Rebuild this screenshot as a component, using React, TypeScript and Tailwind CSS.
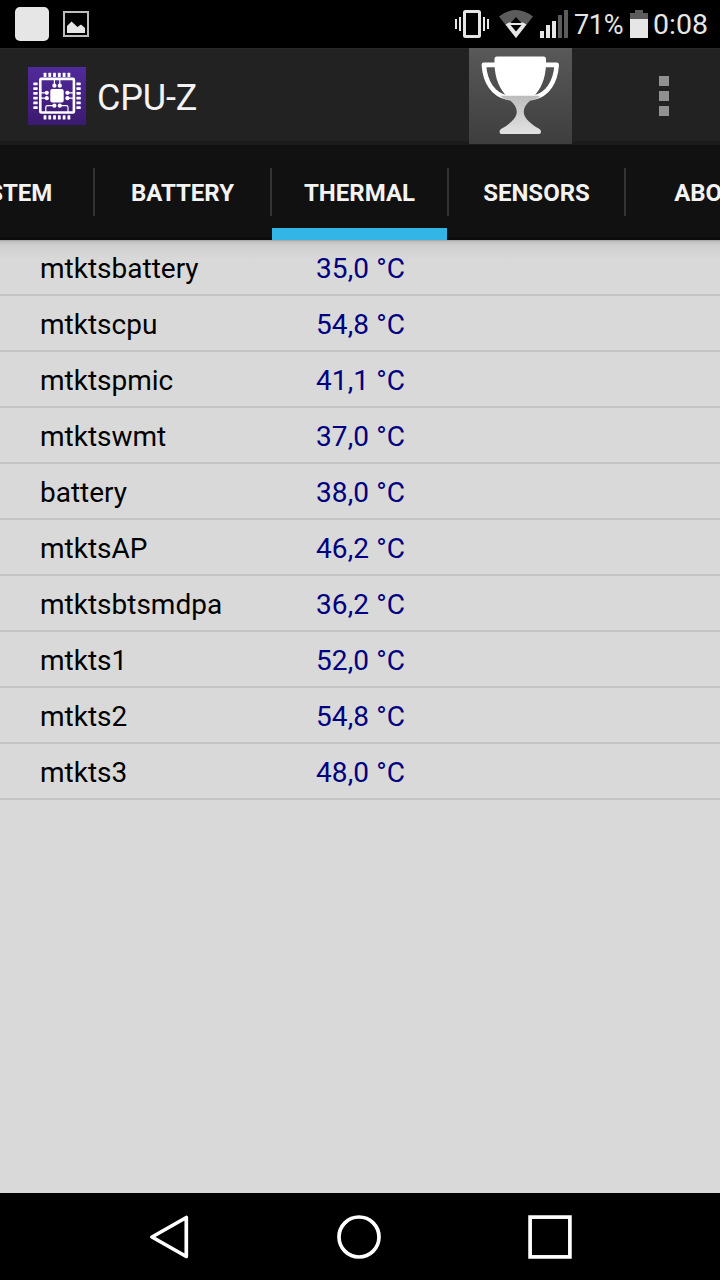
import React from 'react';

interface Sensor {
  name: string;
  value: string;
}

const sensors: Sensor[] = [
  { name: 'mtktsbattery', value: '35,0 °C' },
  { name: 'mtktscpu', value: '54,8 °C' },
  { name: 'mtktspmic', value: '41,1 °C' },
  { name: 'mtktswmt', value: '37,0 °C' },
  { name: 'battery', value: '38,0 °C' },
  { name: 'mtktsAP', value: '46,2 °C' },
  { name: 'mtktsbtsmdpa', value: '36,2 °C' },
  { name: 'mtkts1', value: '52,0 °C' },
  { name: 'mtkts2', value: '54,8 °C' },
  { name: 'mtkts3', value: '48,0 °C' },
];

const tabs = ['SYSTEM', 'BATTERY', 'THERMAL', 'SENSORS', 'ABOUT'];
const activeTab = 'THERMAL';

const pins = [17, 21.75, 26.5, 31.3, 36.1, 40.9];

const ChipIcon = () => (
  <svg width="58" height="58" viewBox="0 0 58 58" className="-mt-[2px] shrink-0">
    <defs>
      <linearGradient id="chip" x1="0" y1="0" x2="0" y2="1">
        <stop offset="0" stopColor="#512a9b" />
        <stop offset="1" stopColor="#3b1a70" />
      </linearGradient>
    </defs>
    <rect width="58" height="58" fill="url(#chip)" />
    <g fill="#fff">
      {pins.map((p) => (
        <g key={p}>
          <rect x={p - 1.4} y="5.7" width="2.8" height="4.3" rx="0.6" />
          <rect x={p - 1.4} y="48.2" width="2.8" height="4.3" rx="0.6" />
          <rect x="5.3" y={p - 1.6} width="4.4" height="2.8" rx="0.6" />
          <rect x="48.4" y={p - 1.6} width="4.4" height="2.8" rx="0.6" />
        </g>
      ))}
      <rect x="22.3" y="22" width="13.4" height="13.4" rx="2" />
      <circle cx="26.4" cy="18.7" r="2.1" />
      <circle cx="31.8" cy="18.7" r="2.1" />
      <circle cx="18.8" cy="25.8" r="2.1" />
      <circle cx="18.8" cy="31.2" r="2.1" />
      <circle cx="39.4" cy="25.8" r="2.1" />
      <circle cx="39.4" cy="31.2" r="2.1" />
      <circle cx="26.4" cy="38.7" r="2.1" />
      <circle cx="31.8" cy="38.7" r="2.1" />
    </g>
    <g fill="none" stroke="#fff" strokeWidth="1.2">
      <rect x="12.3" y="11.9" width="33.6" height="33.6" rx="1" strokeWidth="2.6" />
      <path d="M26.4 18V12M31.8 18V12M13 25.8h6M13 31.2h6M39.4 25.8h6M39.4 31.2h6" />
      <path d="M26.4 38.7h-7q-1.6 0-1.6 1.6V45M31.8 38.7h6.6q1.6 0 1.6 1.6V45" />
    </g>
  </svg>
);

const TrophyIcon = () => (
  <svg width="103" height="96" viewBox="0 0 103 96">
    <defs>
      <linearGradient id="stem" x1="0" y1="0" x2="0" y2="1">
        <stop offset="0" stopColor="#bcbcbc" />
        <stop offset="1" stopColor="#e2e2e2" />
      </linearGradient>
    </defs>
    <path d="M27 16.9H14.9C16 34 24 46.5 38 49.5M76 16.9H87.7C86.6 34 78.6 46.5 65 49.5" fill="none" stroke="#fff" strokeWidth="4.6" strokeLinejoin="round" />
    <path d="M28 8.5H74.5Q77 8.5 77 11V15C77 31 71 42 65 48H37.5C31.5 42 25.5 31 25.5 15V11Q25.5 8.5 28 8.5Z" fill="#fff" />
    <path d="M31 47.8H71.5Q67 52 61 52.8C52.5 60 53 68 60.5 74Q64.5 78 70.5 81Q72 82 72 84Q72 86 70 86H32.5Q30.5 86 30.5 84Q30.5 82 32 81Q38 78 42 74C49.5 68 50 60 41.5 52.8Q35.5 52 31 47.8Z" fill="url(#stem)" />
  </svg>
);

const StatusBar = () => (
  <div className="flex h-12 items-start bg-black text-[#e6e6e6]">
    <div className="mt-[7px] ml-[15px] h-[34px] w-[34px] rounded-[5px] bg-[#e6e6e6]" />
    <svg width="26" height="26" viewBox="0 0 26 26" className="mt-[11px] ml-[14px]">
      <rect x="1" y="1" width="24" height="24" fill="none" stroke="#bdbdbd" strokeWidth="2" />
      <path d="M4 22V15L8.5 10.5L14.5 16L18 13.5L22 17V22Z" fill="#e6e6e6" />
    </svg>
    <svg width="34" height="28" viewBox="0 0 34 28" className="mt-[10px] ml-[366px]" fill="#e6e6e6">
      <path d="M0 9h2v10H0zM4 7h2v14H4zM28 7h2v14h-2zM32 9h2v10h-2z" />
      <rect x="9.5" y="1.5" width="15" height="25" rx="1" fill="none" stroke="#e6e6e6" strokeWidth="3" />
    </svg>
    <svg width="34" height="28" viewBox="0 0 34 28" className="mt-[10px] ml-[10px]">
      <path d="M0 6.5Q17 -6.5 34 6.5L17 28Z" fill="#5c5c5c" />
      <path d="M6.5 14.5L10 12.5H24L27.5 14.5L17 28Z" fill="#e6e6e6" />
      <path d="M17 7L22.5 13H11.5ZM11.5 15H22.5L17 21.5Z" fill="#000" />
    </svg>
    <svg width="28" height="28" viewBox="0 0 28 28" className="mt-[10px] ml-[7px]">
      <path d="M0 21h4v7H0zM6 15h4v13H6zM12 11h4v17h-4z" fill="#e6e6e6" />
      <path d="M18 5h4v23h-4zM24 0h4v28h-4z" fill="#5c5c5c" />
    </svg>
    <span className="ml-[6px] w-[50px] pt-[7px] text-[27px] leading-9 tracking-[-0.3px] whitespace-nowrap">71%</span>
    <svg width="18" height="28" viewBox="0 0 18 28" className="mt-[10px] ml-[6px]">
      <path d="M5 0h8v3h5v6H0V3h5z" fill="#5c5c5c" />
      <path d="M0 9h18v19H0z" fill="#e6e6e6" />
    </svg>
    <span className="ml-[5px] pt-[7px] text-[28.5px] leading-9 whitespace-nowrap">0:08</span>
  </div>
);

const ActionBar = () => (
  <div className="flex h-[97px] border-t border-b-4 border-t-[#292929] border-b-[#1b1b1b] bg-[#222]">
    <div className="flex h-[96px] flex-1 items-center pl-7">
      <ChipIcon />
      <h1 className="ml-[11px] pt-[2px] text-[36px] leading-none tracking-[-0.2px] text-[#f3f3f3]">CPU-Z</h1>
    </div>
    <div className="-mt-px h-[96px] w-[103px] bg-linear-to-b from-[#595959] to-[#3e3e3e]">
      <TrophyIcon />
    </div>
    <div className="flex w-[148px] flex-col gap-[5px] pt-[27px] pl-[87px]">
      <i className="h-[10px] w-[10px] bg-[#919191]" />
      <i className="h-[10px] w-[10px] bg-[#919191]" />
      <i className="h-[10px] w-[10px] bg-[#919191]" />
    </div>
  </div>
);

const TabBar = () => (
  <div className="h-[95px] overflow-hidden bg-[linear-gradient(to_top,#0b0b0b_3px,#111_3px)]">
    <div className="-ml-[82px] flex w-[885px]">
      {tabs.map((tab) => (
        <div key={tab} className="flex h-[95px] w-[177px] shrink-0">
          <div
            className={
              tab === activeTab
                ? 'h-[95px] w-[175px] border-b-[12px] border-[#33b5e5] text-center'
                : 'h-[95px] w-[175px] text-center'
            }
          >
            <span className="block pt-[30px] text-[24px] leading-9 font-bold text-[#f3f3f3]">{tab}</span>
          </div>
          <div className="mt-[23px] h-12 w-[2px] bg-[#333]" />
        </div>
      ))}
    </div>
  </div>
);

const NavBar = () => (
  <div className="flex h-[87px] items-start bg-black pt-[22px]">
    <svg width="40" height="44" viewBox="0 0 40 44" className="ml-[149px]">
      <path d="M37.3 2.5V41.5L3 22Z" fill="none" stroke="#fff" strokeWidth="3.7" strokeLinejoin="round" />
    </svg>
    <svg width="44" height="44" viewBox="0 0 44 44" className="ml-[148px]">
      <circle cx="22" cy="22" r="20" fill="none" stroke="#fff" strokeWidth="3.7" />
    </svg>
    <svg width="44" height="44" viewBox="0 0 44 44" className="ml-[147px]">
      <rect x="2.1" y="2.1" width="39.8" height="39.8" fill="none" stroke="#fff" strokeWidth="3.7" />
    </svg>
  </div>
);

const App: React.FC = () => {
  return (
    <div className="flex h-[1280px] w-[720px] flex-col overflow-hidden bg-[#d9d9d9] font-[Roboto,sans-serif]">
      <StatusBar />
      <ActionBar />
      <TabBar />
      <div className="flex-1 bg-[linear-gradient(to_bottom,#a3a3a3_0,#c3c3c3_2px,#cecece_5px,#d4d4d4_12px,#d9d9d9_20px)]">
        {sensors.map((sensor) => (
          <div key={sensor.name} className="flex h-14 border-b-2 border-[#c3c3c3] pl-10 text-[28px] leading-[58px]">
            <span className="w-[276px] text-black">{sensor.name}</span>
            <span className="tracking-[0.1px] text-[#000080]">{sensor.value}</span>
          </div>
        ))}
      </div>
      <NavBar />
    </div>
  );
};

export default App;
